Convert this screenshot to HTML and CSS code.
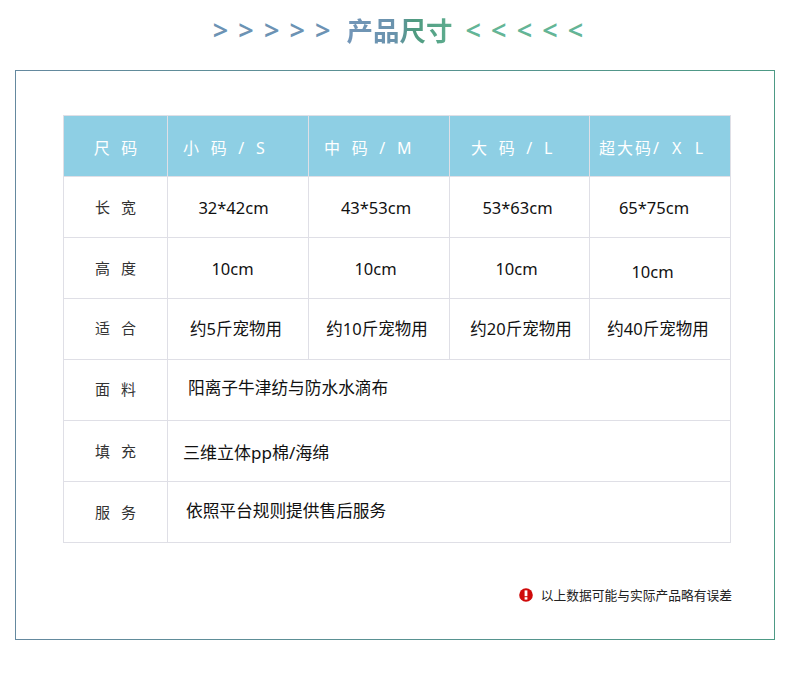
FILE: index.html
```html
<!DOCTYPE html>
<html lang="zh-CN">
<head>
<meta charset="utf-8">
<title>产品尺寸</title>
<link rel="stylesheet" href="styles.css">
</head>
<body>
<header class="title">
  <span class="arrows arrows-l">&gt; &gt; &gt; &gt; &gt;</span>
  <h1 class="heading">产品尺寸</h1>
  <span class="arrows arrows-r">&lt; &lt; &lt; &lt; &lt;</span>
</header>
<main class="frame">
  <table class="spec">
    <colgroup><col class="c0"><col class="c1"><col class="c2"><col class="c3"><col class="c4"></colgroup>
    <thead>
      <tr><th>尺 码</th><th class="hs">小 码 / S</th><th class="hm">中 码 / M</th><th class="hl">大 码 / L</th><th class="hx">超大码/ X L</th></tr>
    </thead>
    <tbody>
      <tr><th>长 宽</th><td class="pr9">32*42cm</td><td class="pr6">43*53cm</td><td class="pr4">53*63cm</td><td class="pr12">65*75cm</td></tr>
      <tr><th>高 度</th><td class="pr11">10cm</td><td class="pr7">10cm</td><td class="pr6">10cm</td><td class="pr15 low">10cm</td></tr>
      <tr class="fit"><th class="up">适 合</th><td class="pr4">约5斤宠物用</td><td class="pr4">约10斤宠物用</td><td class="pl3">约20斤宠物用</td><td class="pr4">约40斤宠物用</td></tr>
      <tr><th class="up">面 料</th><td colspan="4" class="wide w1">阳离子牛津纺与防水水滴布</td></tr>
      <tr><th>填 充</th><td colspan="4" class="wide w2">三维立体pp棉/海绵</td></tr>
      <tr><th>服 务</th><td colspan="4" class="wide w3">依照平台规则提供售后服务</td></tr>
    </tbody>
  </table>
  <p class="note">
    <svg class="warn" viewBox="0 0 14 14" aria-hidden="true"><circle cx="7" cy="7" r="6.8" fill="#cf0a0a"/><rect x="5.6" y="2.4" width="2.8" height="5.8" fill="#fff"/><rect x="5.6" y="9.2" width="2.8" height="2.4" fill="#fff"/></svg>
    <span>以上数据可能与实际产品略有误差</span>
  </p>
</main>
</body>
</html>
```
FILE: styles.css
```css
* { box-sizing: border-box; }
html, body { margin: 0; padding: 0; background: #fff; }
body {
  width: 790px;
  height: 686px;
  overflow: hidden;
  font-family: "Noto Sans", "Noto Sans CJK SC", sans-serif;
  color: #222;
}
.title {
  height: 70px;
  display: flex;
  align-items: flex-start;
  justify-content: center;
  gap: 16px;
  padding: 10px 0 0 6px;
}
.arrows {
  font-family: "Noto Sans", sans-serif;
  font-size: 27px;
  line-height: 40px;
  font-weight: 600;
  word-spacing: 3.1px;
}
.arrows-l { color: #6c93b4; }
.arrows-r { color: #64b596; margin-left: -3px; }
.heading {
  margin: 0;
  font-family: "Noto Sans CJK SC", sans-serif;
  font-size: 26.5px;
  line-height: 40px;
  font-weight: 700;
  background: linear-gradient(90deg, #7396b8 0%, #6a93ad 45%, #4f9a80 62%, #5fae90 100%);
  -webkit-background-clip: text;
  background-clip: text;
  color: transparent;
}
.frame {
  width: 760px;
  height: 570px;
  margin-left: 15px;
  padding: 44px 0 0 47px;
  border: 1px solid;
  border-image: linear-gradient(90deg, #65899f, #4d9a85) 1;
}
.spec {
  width: 668px;
  border-collapse: collapse;
  table-layout: fixed;
}
.c0 { width: 104px; }
.c1 { width: 141px; }
.c2 { width: 141px; }
.c3 { width: 140px; }
.c4 { width: 141px; }
.spec th, .spec td {
  height: 61px;
  padding: 0;
  border: 1px solid #dfdfe6;
  text-align: center;
  vertical-align: middle;
  font-weight: 400;
}
.spec td { font-size: 16.5px; color: #111; }
.spec tbody th { font-size: 15px; color: #333; word-spacing: 7px; padding-bottom: 1px; }
.spec tbody .up { padding-bottom: 3px; }
.spec thead th {
  background: #8ecfe4;
  color: #fff;
  font-size: 16px;
  word-spacing: 7.5px;
  padding-top: 2px;
}
.spec thead .hs, .spec thead .hm, .spec thead .hl, .spec thead .hx { text-align: left; }
.spec thead .hs { padding-left: 15px; }
.spec thead .hm { padding-left: 15px; }
.spec thead .hl { padding-left: 21px; }
.spec thead .hx { padding-left: 9px; word-spacing: 5px; letter-spacing: 2px; }
.spec .pr4 { padding-right: 4px; }
.spec .pr6 { padding-right: 6px; }
.spec .pr7 { padding-right: 7px; }
.spec .pr9 { padding-right: 9px; }
.spec .pr11 { padding-right: 11px; }
.spec .pr12 { padding-right: 12px; }
.spec .pr15 { padding-right: 15px; }
.spec .pl3 { padding-left: 3px; }
.spec .low { padding-top: 6px; }
.spec .fit td { padding-bottom: 2px; }
.spec .wide { text-align: left; font-size: 16.7px; }
.spec .w1 { padding: 0 0 7px 20px; }
.spec .w2 { padding: 0 0 0 15px; font-size: 17px; }
.spec .w3 { padding: 0 0 4px 18px; }
.note {
  margin: 43px 0 0;
  width: 669px;
  display: flex;
  justify-content: flex-end;
  align-items: center;
  gap: 8px;
  font-family: "Noto Sans CJK SC", sans-serif;
  font-size: 12.75px;
  line-height: 18px;
  color: #222;
}
.warn { width: 14px; height: 14px; }
```
